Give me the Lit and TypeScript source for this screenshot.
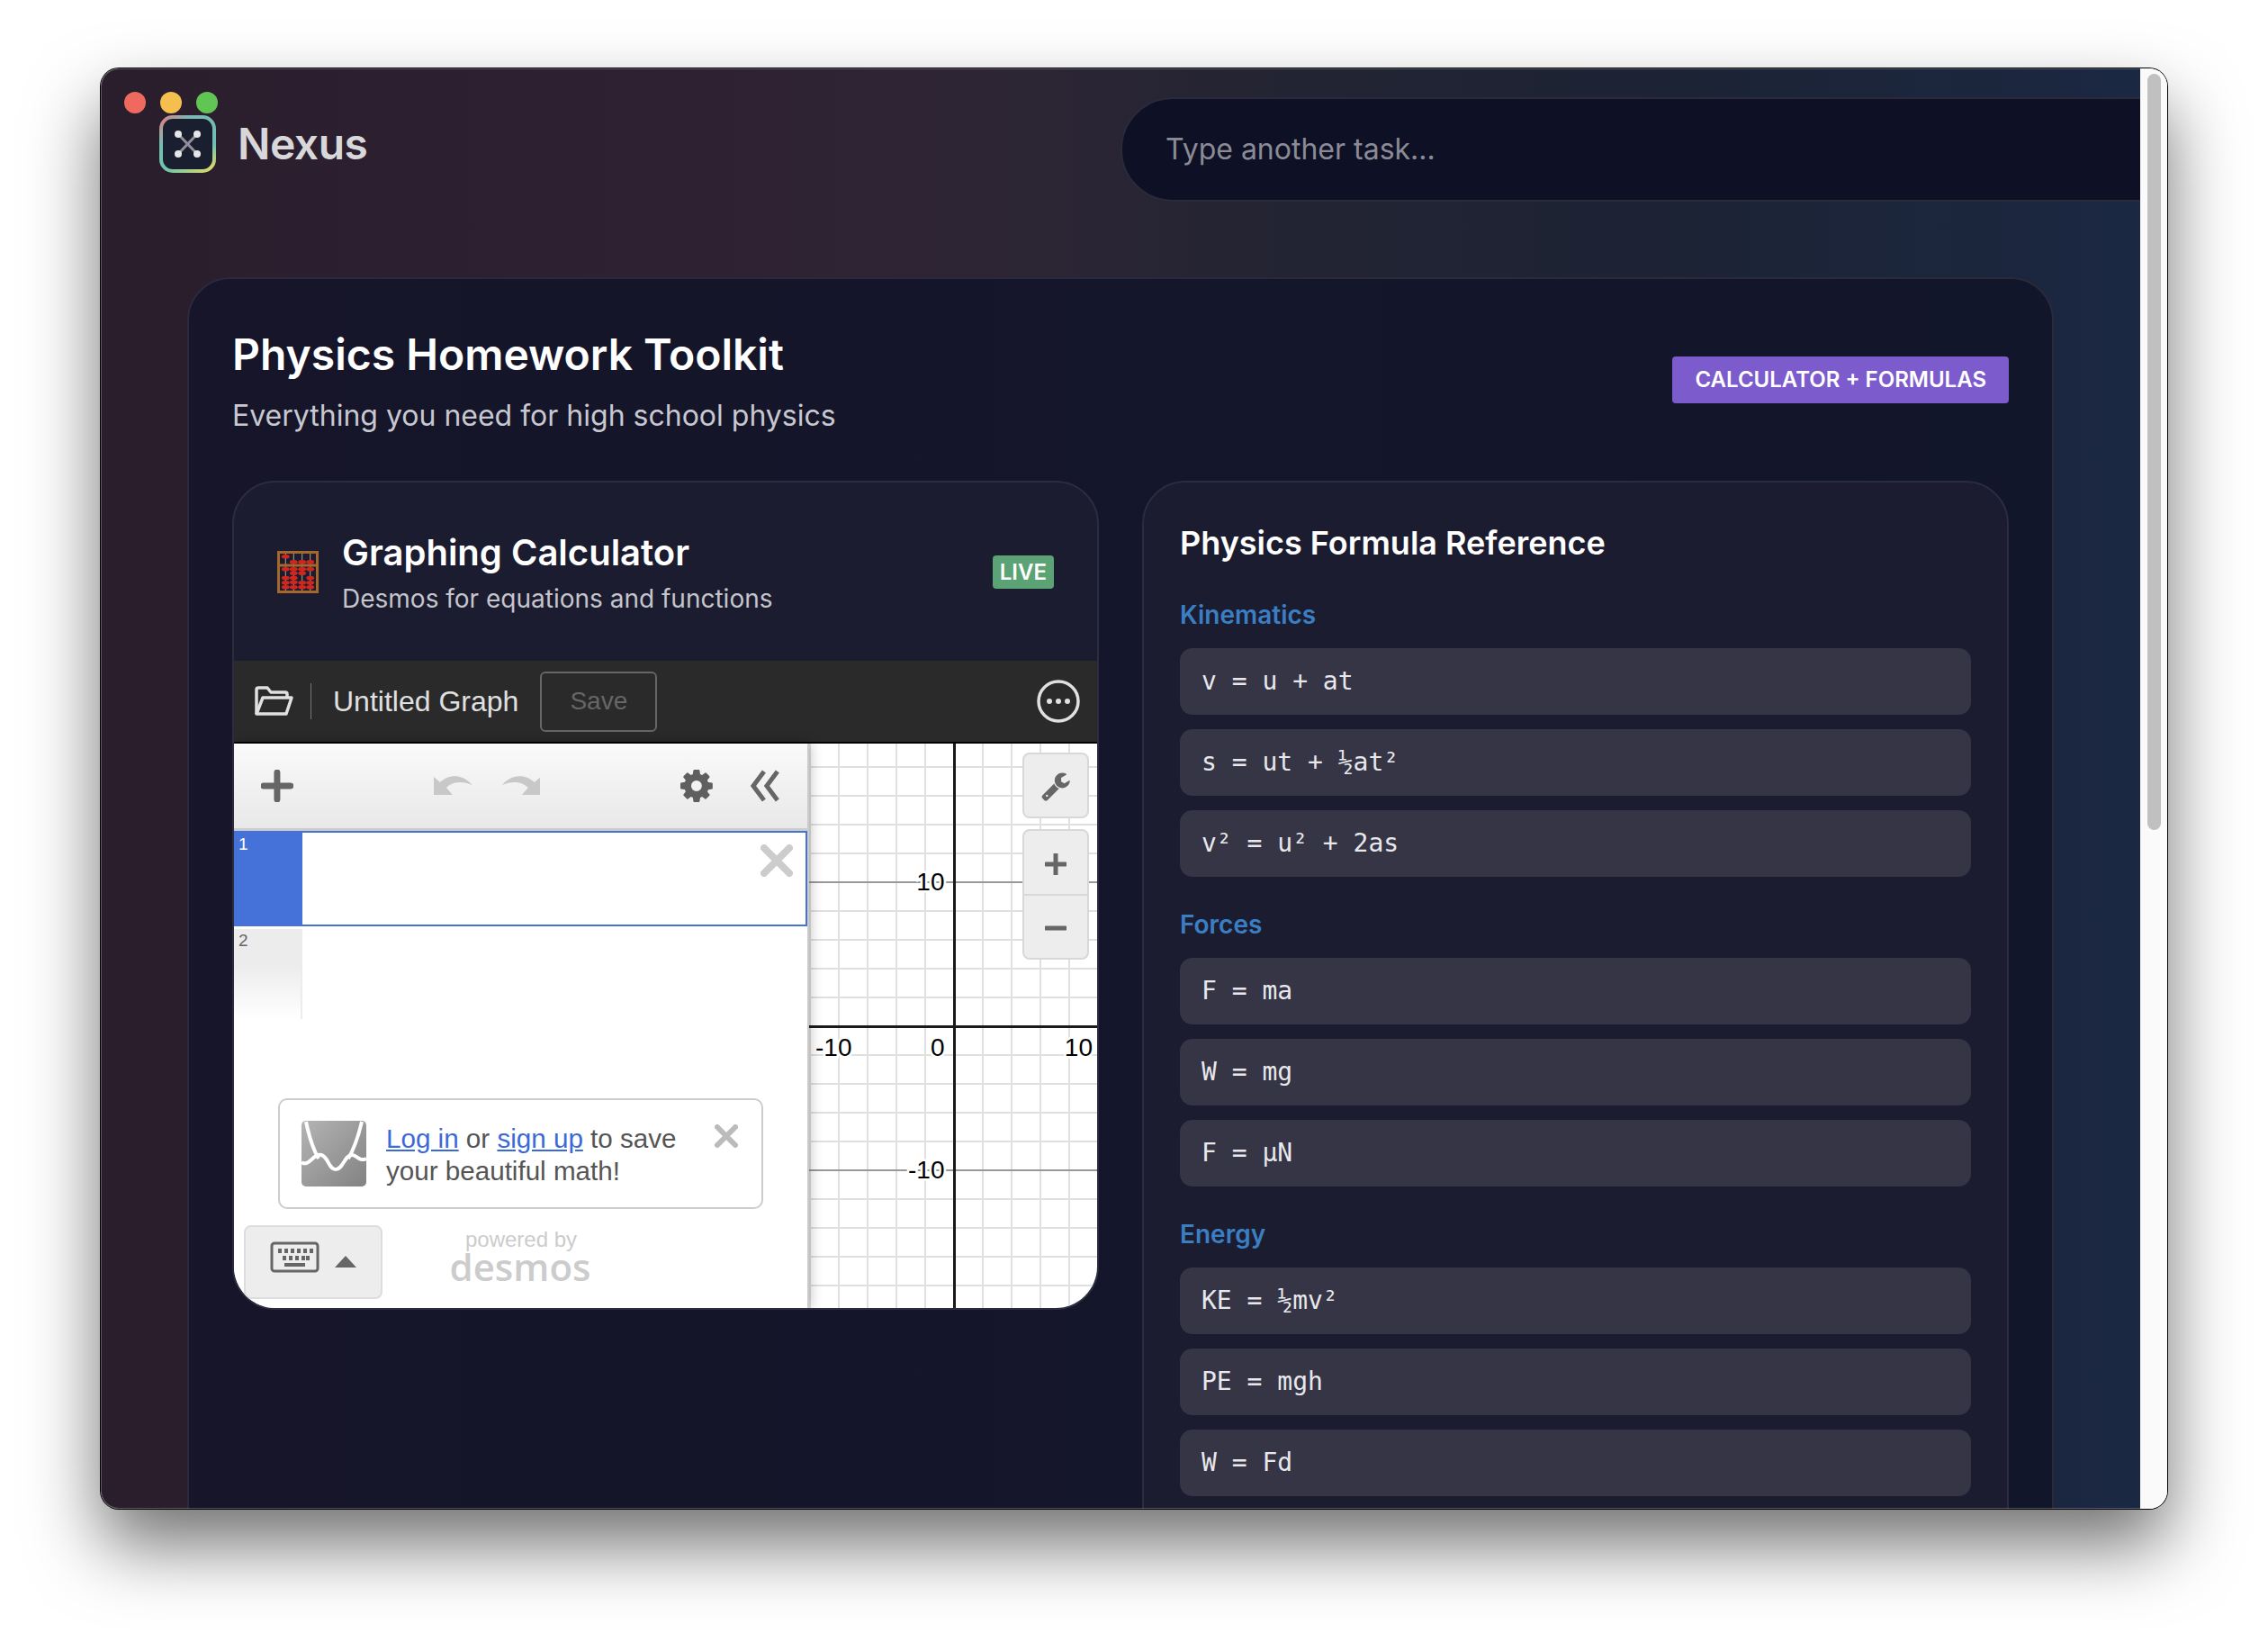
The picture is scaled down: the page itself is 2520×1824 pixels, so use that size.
import { LitElement, html, css, svg } from 'lit';
import { customElement } from 'lit/decorators.js';

const SECTIONS = [
  { name: 'Kinematics', rows: ['v = u + at', 's = ut + ½at²', 'v² = u² + 2as'] },
  { name: 'Forces', rows: ['F = ma', 'W = mg', 'F = µN'] },
  { name: 'Energy', rows: ['KE = ½mv²', 'PE = mgh', 'W = Fd'] },
];

// graph origin inside the 322x627 canvas
const OX = 161.5;
const OY = 314.5;
const STEP = 32;

function range(from: number, to: number, step: number) {
  const out: number[] = [];
  for (let v = from; v <= to; v += step) out.push(v);
  return out;
}

function graphLines() {
  const xs = range(161 - STEP * 5, 322, STEP);
  const ys = range(314 - STEP * 9, 627, STEP);
  return svg`
    ${xs.map((x) => svg`<line x1=${x} x2=${x} y1="0" y2="627" stroke="#e0e0e0" stroke-width="2"></line>`)}
    ${ys.map((y) => svg`<line x1="0" x2="322" y1=${y} y2=${y} stroke="#e0e0e0" stroke-width="2"></line>`)}
    <line x1="0" x2="322" y1="154" y2="154" stroke="#999" stroke-width="2"></line>
    <line x1="0" x2="322" y1="474" y2="474" stroke="#999" stroke-width="2"></line>
    <line x1=${OX} x2=${OX} y1="0" y2="627" stroke="#1a1a1a" stroke-width="3"></line>
    <line x1="0" x2="322" y1=${OY} y2=${OY} stroke="#1a1a1a" stroke-width="3"></line>
  `;
}

function abacus() {
  const columns = [9.3, 18.3, 27.7, 36.7];
  const beads = [
    [6.3, 20.3, 30, 35.3, 40.3],
    [12.3, 20.3, 24.7, 30, 34.7, 40.3],
    [12.3, 20.3, 24.7, 35.3, 40.3],
    [12.3, 20.3, 30, 35.3, 40.3],
  ];
  return html`<svg class="abacus" viewBox="0 0 46 47">
    <rect x="1.5" y="1.5" width="43" height="44" fill="none" stroke="#a5682c" stroke-width="3"></rect>
    ${columns.map((x) => svg`<line x1=${x} x2=${x} y1="3" y2="44" stroke="#b4a48e" stroke-width="1"></line>`)}
    <rect x="3" y="14.5" width="40" height="3" fill="#a5682c"></rect>
    ${columns.map((x, i) => beads[i].map(
      (y) => svg`<ellipse cx=${x} cy=${y} rx="4.4" ry="2.3" fill="#d2261c"></ellipse>`,
    ))}
  </svg>`;
}

@customElement('app-root')
export class AppRoot extends LitElement {
  static styles = css`
    :host {
      display: block;
      box-sizing: border-box;
      height: 1824px;
      padding: 76px 112px 0;
      background: #fff;
      font-family: Inter, "Liberation Sans", sans-serif;
    }
    * { box-sizing: border-box; }

    .window {
      position: relative;
      display: flex;
      width: 2296px;
      height: 1600px;
      border-radius: 20px;
      overflow: hidden;
      box-shadow: 0 0 0 1px #000, 0 40px 80px rgba(0, 0, 0, 0.56);
    }
    .window::after {
      content: '';
      position: absolute;
      inset: 0;
      border-radius: 20px;
      box-shadow: inset 0 0 0 1px rgba(255, 255, 255, 0.25);
      pointer-events: none;
    }
    .lights {
      position: absolute;
      left: 26px;
      top: 26px;
      display: flex;
      gap: 16px;
      z-index: 2;
    }
    .lights i { width: 24px; height: 24px; border-radius: 50%; }

    .page {
      flex: none;
      width: 2266px;
      overflow: hidden;
      background: linear-gradient(90deg, #2a1e2d 0%, #2e2132 30%, #2e2534 42%, #232433 58%, #1c2335 78%, #1b2842 100%);
    }
    .scrollbar {
      flex: none;
      width: 30px;
      background: #fafafa;
      padding: 6px 7px 0 8px;
    }
    .thumb { width: 15px; height: 840px; border-radius: 8px; background: #c0c0c0; }

    .topbar { display: flex; align-items: flex-start; padding: 32px 0 0 65px; height: 147px; }
    .brand { flex: 0 0 1068px; display: flex; align-items: center; gap: 24px; margin-top: 20px; }
    .logo {
      width: 63px;
      height: 64px;
      padding: 4px;
      border-radius: 15px;
      background: conic-gradient(from 0deg, #7fb6b4, #6cc0b4 90deg, #d8d86c 135deg, #6fc4ae 225deg, #72bfb0 270deg, #cf8a8c 315deg, #7fb6b4);
    }
    .logo svg { display: block; width: 100%; height: 100%; border-radius: 11px; background: #1a1f30; }
    .brand span { font-size: 48px; font-weight: 600; line-height: 64px; color: #d8d8da; letter-spacing: -0.5px; }
    .search {
      flex: none;
      width: 1400px;
      height: 116px;
      display: flex;
      align-items: center;
      padding: 0 0 2px 48px;
      border: 2px solid #2a2a3a;
      border-radius: 58px;
      background: #0e1026;
      color: #8b8b95;
      font-size: 32px;
    }

    .card {
      width: 2074px;
      margin: 85px 0 0 96px;
      padding: 48px;
      height: 1500px;
      border: 2px solid #2a2a3c;
      border-radius: 48px;
      background: linear-gradient(90deg, #16152a, #12162a);
    }
    .card-head { display: flex; justify-content: space-between; align-items: center; margin-bottom: 48px; }
    h1 { margin: 0 0 8px; font-size: 48px; line-height: 72px; font-weight: 600; color: #fff; }
    .card-head p { margin: 0; font-size: 32px; line-height: 48px; color: #c8c8d0; }
    .tag {
      padding: 0 25px;
      height: 52px;
      line-height: 52px;
      border-radius: 4px;
      background: #7c5bcc;
      color: #fff;
      font-size: 24px;
      font-weight: 600;
    }

    .panels { display: grid; grid-template-columns: 1fr 1fr; gap: 48px; align-items: start; }
    .panel {
      border: 2px solid #2c2c40;
      border-radius: 48px;
      background: #1c1c30;
      overflow: hidden;
    }
    .calc-head { display: flex; align-items: center; padding: 48px; }
    .abacus { width: 46px; height: 47px; flex: none; margin-right: 26px; }
    .calc-title { flex: 1; }
    .calc-title h2 { margin: 0; font-size: 40px; line-height: 60px; font-weight: 600; color: #fff; }
    .calc-title p { margin: 0; font-size: 28px; line-height: 42px; color: #c5c5cc; }
    .live {
      height: 37px;
      padding: 0 8px;
      line-height: 37px;
      border-radius: 4px;
      background: #5ba374;
      color: #fff;
      font-size: 24px;
      font-weight: 600;
    }

    .desmos { font-family: "Liberation Sans", Arial, sans-serif; }
    .dbar {
      height: 92px;
      display: flex;
      align-items: center;
      padding: 0 19px 0 22px;
      background: #2a2a2a;
      border-bottom: 2px solid #000;
      color: #e0e0e0;
      font-size: 32px;
    }
    .folder { width: 44px; height: 34px; }
    .dbar .sep { width: 1px; height: 40px; margin: 0 24px 0 19px; background: #777; }
    .save {
      margin-left: 24px;
      width: 130px;
      height: 67px;
      display: flex;
      align-items: center;
      justify-content: center;
      border: 2px solid #666;
      border-radius: 6px;
      color: #666;
      font-size: 28px;
    }
    .more { margin-left: auto; width: 48px; height: 48px; }

    .dbody { display: flex; height: 627px; background: #fff; }
    .list {
      position: relative;
      z-index: 1;
      flex: none;
      width: 639px;
      display: flex;
      flex-direction: column;
      background: #fff;
      border-right: 2px solid #ccc;
      box-shadow: 0 0 14px rgba(0, 0, 0, 0.3);
    }
    .lhead {
      height: 97px;
      flex: none;
      display: flex;
      align-items: center;
      padding: 0 31px 1px 30px;
      background: linear-gradient(#fafafa, #e8e8e8);
      border-bottom: 3px solid #ccc;
    }
    .plus { width: 36px; height: 36px; }
    .undo { width: 43px; height: 24px; fill: #c8c8c8; margin-top: -4px; }
    .undo.first { margin-left: 156px; }
    .undo.second { margin-left: 33px; }
    .gear { width: 36px; height: 36px; fill: #5f5f5f; margin-left: 156px; }
    .chev { width: 32px; height: 36px; margin-left: 42px; }

    .expr { height: 106px; flex: none; display: flex; border: 2px solid #4472d8; border-left: 0; }
    .gutter { width: 76px; padding: 2px 0 0 5px; background: #4472d8; color: #fff; font-size: 19px; line-height: 22px; }
    .expr .close { width: 36px; height: 36px; margin: 13px 14px 0 auto; }
    .expr2 { height: 100px; flex: none; margin-top: 3px; display: flex; }
    .expr2 .gutter {
      background: linear-gradient(#ececec 40%, #fff);
      border-right: 2px solid #ececec;
      color: #666;
    }

    .tip {
      flex: none;
      margin: 88px 0 0 49px;
      width: 539px;
      height: 123px;
      display: flex;
      padding: 23px 0 0 24px;
      border: 2px solid #ccc;
      border-radius: 10px;
      color: #555;
      font-size: 29.6px;
      line-height: 36px;
    }
    .tip .mark { width: 72px; height: 73px; flex: none; margin-right: 22px; }
    .tip a { color: #3b6ad8; text-decoration: underline; }
    .tip .copy { flex: 1; margin-top: 2px; white-space: nowrap; }
    .tip .close { width: 26px; height: 26px; margin: 4px 26px 0 0; flex: none; }

    .foot { display: flex; margin-top: 18px; flex: none; }
    .kbd {
      width: 154px;
      height: 82px;
      margin-left: 11px;
      padding: 16px 0 0 27px;
      display: flex;
      gap: 17px;
      background: #ededed;
      border: 2px solid #ddd;
      border-radius: 8px;
    }
    .kbd .keys { width: 55px; height: 35px; }
    .kbd .up { width: 24px; height: 13px; margin-top: 16px; fill: #666; }
    .powered { width: 308px; text-align: center; color: #ccc; font-size: 24px; line-height: 24px; margin-top: 4px; }
    .powered b {
      display: block;
      margin-left: -2px;
      font-family: "Open Sans", sans-serif;
      font-weight: 600;
      font-size: 42px;
      line-height: 36px;
      letter-spacing: 0;
    }

    .graph { position: relative; flex: 1; overflow: hidden; }
    .graph > svg { display: block; width: 322px; height: 627px; }
    .graph text { font-size: 28px; fill: #000; paint-order: stroke; stroke: #fff; stroke-width: 5px; }
    .tools {
      position: absolute;
      left: 237px;
      width: 74px;
      background: #ededed;
      border: 2px solid #d8d8d8;
      border-radius: 8px;
      display: flex;
      align-items: center;
      justify-content: center;
    }
    .wrench { top: 10px; height: 73px; }
    .wrench svg { width: 34px; height: 34px; fill: #666; }
    .zoom { top: 95px; height: 145px; flex-direction: column; }
    .zoom div { flex: 1; width: 100%; padding-top: 4px; display: flex; align-items: center; justify-content: center; }
    .zoom div + div { border-top: 2px solid #d8d8d8; }
    .zoom svg { width: 24px; height: 24px; }

    .formulas { padding: 40px; height: 1300px; }
    .formulas h2 { margin: 0 0 32px; font-size: 36px; line-height: 54px; font-weight: 600; color: #fff; }
    .formulas h3 { margin: 0 0 16px; font-size: 28px; line-height: 42px; font-weight: 600; color: #3a7fc4; }
    .section { margin-bottom: 32px; display: flex; flex-direction: column; }
    .row {
      height: 74px;
      margin-bottom: 16px;
      padding: 16px 24px;
      border-radius: 14px;
      background: #353546;
      color: #e8e8ec;
      font-family: "DejaVu Sans Mono", "Liberation Mono", monospace;
      font-size: 28px;
      line-height: 42px;
    }
    .row:last-child { margin-bottom: 0; }
  `;

  render() {
    return html`
      <div class="window">
        <div class="lights">
          <i style="background:#ee6a5f"></i>
          <i style="background:#f5bf4f"></i>
          <i style="background:#61c554"></i>
        </div>
        <div class="page">
          <div class="topbar">
            <div class="brand">
              <div class="logo">
                <svg viewBox="0 0 55 56">
                  <g stroke="#8f9099" stroke-width="3"><line x1="17" y1="17" x2="38" y2="39"></line><line x1="38" y1="17" x2="17" y2="39"></line></g>
                  <g fill="#e6e6e8"><circle cx="17" cy="17" r="4"></circle><circle cx="38" cy="17" r="4"></circle><circle cx="17" cy="39" r="4"></circle><circle cx="38" cy="39" r="4"></circle></g>
                </svg>
              </div>
              <span>Nexus</span>
            </div>
            <div class="search">Type another task...</div>
          </div>

          <div class="card">
            <div class="card-head">
              <div>
                <h1>Physics Homework Toolkit</h1>
                <p>Everything you need for high school physics</p>
              </div>
              <div class="tag">CALCULATOR + FORMULAS</div>
            </div>
            <div class="panels">
              ${this.renderCalculator()}
              <div class="panel formulas">
                <h2>Physics Formula Reference</h2>
                ${SECTIONS.map((s) => html`
                  <div class="section">
                    <h3>${s.name}</h3>
                    ${s.rows.map((r) => html`<div class="row">${r}</div>`)}
                  </div>
                `)}
              </div>
            </div>
          </div>
        </div>
        <div class="scrollbar"><div class="thumb"></div></div>
      </div>
    `;
  }

  renderCalculator() {
    return html`
      <div class="panel">
        <div class="calc-head">
          ${abacus()}
          <div class="calc-title">
            <h2>Graphing Calculator</h2>
            <p>Desmos for equations and functions</p>
          </div>
          <div class="live">LIVE</div>
        </div>
        <div class="desmos">
          <div class="dbar">
            <svg class="folder" viewBox="0 0 44 34" fill="none" stroke="#e0e0e0" stroke-width="3.5" stroke-linejoin="round">
              <path d="M3 31 V4 Q3 2 5 2 H15 L19 7 H35 Q37 7 37 9 V12"></path>
              <path d="M3 31 L10 13 H42 L36 31 Z"></path>
            </svg>
            <div class="sep"></div>
            <span>Untitled Graph</span>
            <div class="save">Save</div>
            <svg class="more" viewBox="0 0 48 48">
              <circle cx="24" cy="24" r="22" fill="none" stroke="#e0e0e0" stroke-width="3.5"></circle>
              <circle cx="14" cy="24" r="3" fill="#e0e0e0"></circle><circle cx="24" cy="24" r="3" fill="#e0e0e0"></circle><circle cx="34" cy="24" r="3" fill="#e0e0e0"></circle>
            </svg>
          </div>
          <div class="dbody">
            <div class="list">
              <div class="lhead">
                <svg class="plus" viewBox="0 0 36 36"><path d="M18 3 V33 M3 18 H33" stroke="#666" stroke-width="7" stroke-linecap="round"></path></svg>
                <svg class="undo first" viewBox="0 0 43 24"><path d="M0 24 V4 L7 10 C16 1 32 0 43 13 C32 8 20 9 14 16 L21 24 Z"></path></svg>
                <svg class="undo second" viewBox="0 0 43 24"><path d="M43 24 V4 L36 10 C27 1 11 0 0 13 C11 8 23 9 29 16 L22 24 Z"></path></svg>
                <svg class="gear" viewBox="128 128 1536 1536"><path d="M1152 896q0-106-75-181t-181-75-181 75-75 181 75 181 181 75 181-75 75-181zm512-109v222q0 12-8 23t-20 13l-185 28q-19 54-39 91 35 50 107 138 10 12 10 25t-9 23q-27 37-99 108t-94 71q-12 0-26-9l-138-108q-44 23-91 38-16 136-29 186-7 28-36 28h-222q-14 0-24.5-8.5t-11.5-21.5l-28-184q-49-16-90-37l-141 107q-10 9-25 9-14 0-25-11-126-114-165-168-7-10-7-23 0-12 8-23 15-21 51-66.5t54-70.5q-27-50-41-99l-183-27q-13-2-21-12.5t-8-23.5v-222q0-12 8-23t19-13l186-28q14-46 39-92-40-57-107-138-10-12-10-24 0-10 9-23 26-36 98.5-107.5t94.5-71.5q13 0 26 10l138 107q44-23 91-38 16-136 29-186 7-28 36-28h222q14 0 24.5 8.5t11.5 21.5l28 184q49 16 90 37l142-107q9-9 24-9 13 0 25 10 129 119 165 170 7 8 7 22 0 12-8 23-15 21-51 66.5t-54 70.5q26 50 41 98l183 28q13 2 21 12.5t8 23.5z"></path></svg>
                <svg class="chev" viewBox="0 0 32 36" fill="none" stroke="#666" stroke-width="5"><path d="M15 2 L3 18 L15 34 M30 2 L18 18 L30 34"></path></svg>
              </div>
              <div class="expr">
                <div class="gutter">1</div>
                <svg class="close" viewBox="0 0 36 36"><path d="M4 4 L32 32 M32 4 L4 32" stroke="#ccc" stroke-width="8" stroke-linecap="round"></path></svg>
              </div>
              <div class="expr2"><div class="gutter">2</div></div>
              <div class="tip">
                <svg class="mark" viewBox="0 0 72 73">
                  <defs><linearGradient id="mk" x1="0" y1="0" x2="1" y2="1"><stop offset="0" stop-color="#b4b4b4"></stop><stop offset="1" stop-color="#828282"></stop></linearGradient></defs>
                  <rect width="72" height="73" rx="5" fill="url(#mk)"></rect>
                  <g fill="none" stroke="#fff" stroke-width="4">
                    <path d="M5 1 C9 20 13 32 19 42 M67 1 C63 18 59 30 52 42"></path>
                    <path d="M0 46 C8 52 13 36 22 38 C30 40 30 54 38 54 C46 54 48 38 56 38 C62 38 64 46 72 42"></path>
                  </g>
                </svg>
                <div class="copy"><a>Log in</a> or <a>sign up</a> to save<br />your beautiful math!</div>
                <svg class="close" viewBox="0 0 26 26"><path d="M3 3 L23 23 M23 3 L3 23" stroke="#bbb" stroke-width="6" stroke-linecap="round"></path></svg>
              </div>
              <div class="foot">
                <div class="kbd">
                  <svg class="keys" viewBox="0 0 55 35">
                    <rect x="2" y="2" width="51" height="31" rx="3" fill="none" stroke="#666" stroke-width="3"></rect>
                    <g fill="#666">
                      ${[9, 16, 23, 30, 37, 44].map((x) => svg`<rect x=${x} y="8" width="4" height="5"></rect>`)}
                      ${[14, 21, 28, 35, 40].map((x) => svg`<rect x=${x} y="16" width="4" height="5"></rect>`)}
                      <rect x="16" y="24" width="23" height="4"></rect>
                    </g>
                  </svg>
                  <svg class="up" viewBox="0 0 24 13"><path d="M12 0 L24 13 H0 Z"></path></svg>
                </div>
                <div class="powered">powered by<b>desmos</b></div>
              </div>
            </div>
            <div class="graph">
              <svg viewBox="0 0 322 627">
                ${graphLines()}
                <text x=${OX - 11} y=${OY - 152} text-anchor="end">10</text>
                <text x=${OX - 11} y=${OY + 168} text-anchor="end">-10</text>
                <text x="7" y=${OY + 32}>-10</text>
                <text x=${OX - 11} y=${OY + 32} text-anchor="end">0</text>
                <text x="315" y=${OY + 32} text-anchor="end">10</text>
              </svg>
              <div class="tools wrench">
                <svg viewBox="0 0 1792 1792"><path d="M448 1472q0-26-19-45t-45-19-45 19-19 45 19 45 45 19 45-19 19-45zm644-420l-682 682q-37 37-90 37-52 0-91-37l-106-108q-38-36-38-90 0-53 38-91l681-681q39 98 114.5 173.5t173.5 114.5zm634-435q0 39-23 106-47 134-164.5 217.5t-258.5 83.5q-185 0-316.5-131.5t-131.5-316.5 131.5-316.5 316.5-131.5q58 0 121.5 16.5t107.5 46.5q16 11 16 28t-16 28l-293 169v224l193 107q5-3 79-48.5t135.5-81 70.5-35.5q15 0 23.5 10t8.5 25z"></path></svg>
              </div>
              <div class="tools zoom">
                <div><svg viewBox="0 0 24 24"><path d="M12 1 V23 M1 12 H23" stroke="#666" stroke-width="5" stroke-linecap="round"></path></svg></div>
                <div><svg viewBox="0 0 24 24"><path d="M1 12 H23" stroke="#666" stroke-width="5" stroke-linecap="round"></path></svg></div>
              </div>
            </div>
          </div>
        </div>
      </div>
    `;
  }
}
